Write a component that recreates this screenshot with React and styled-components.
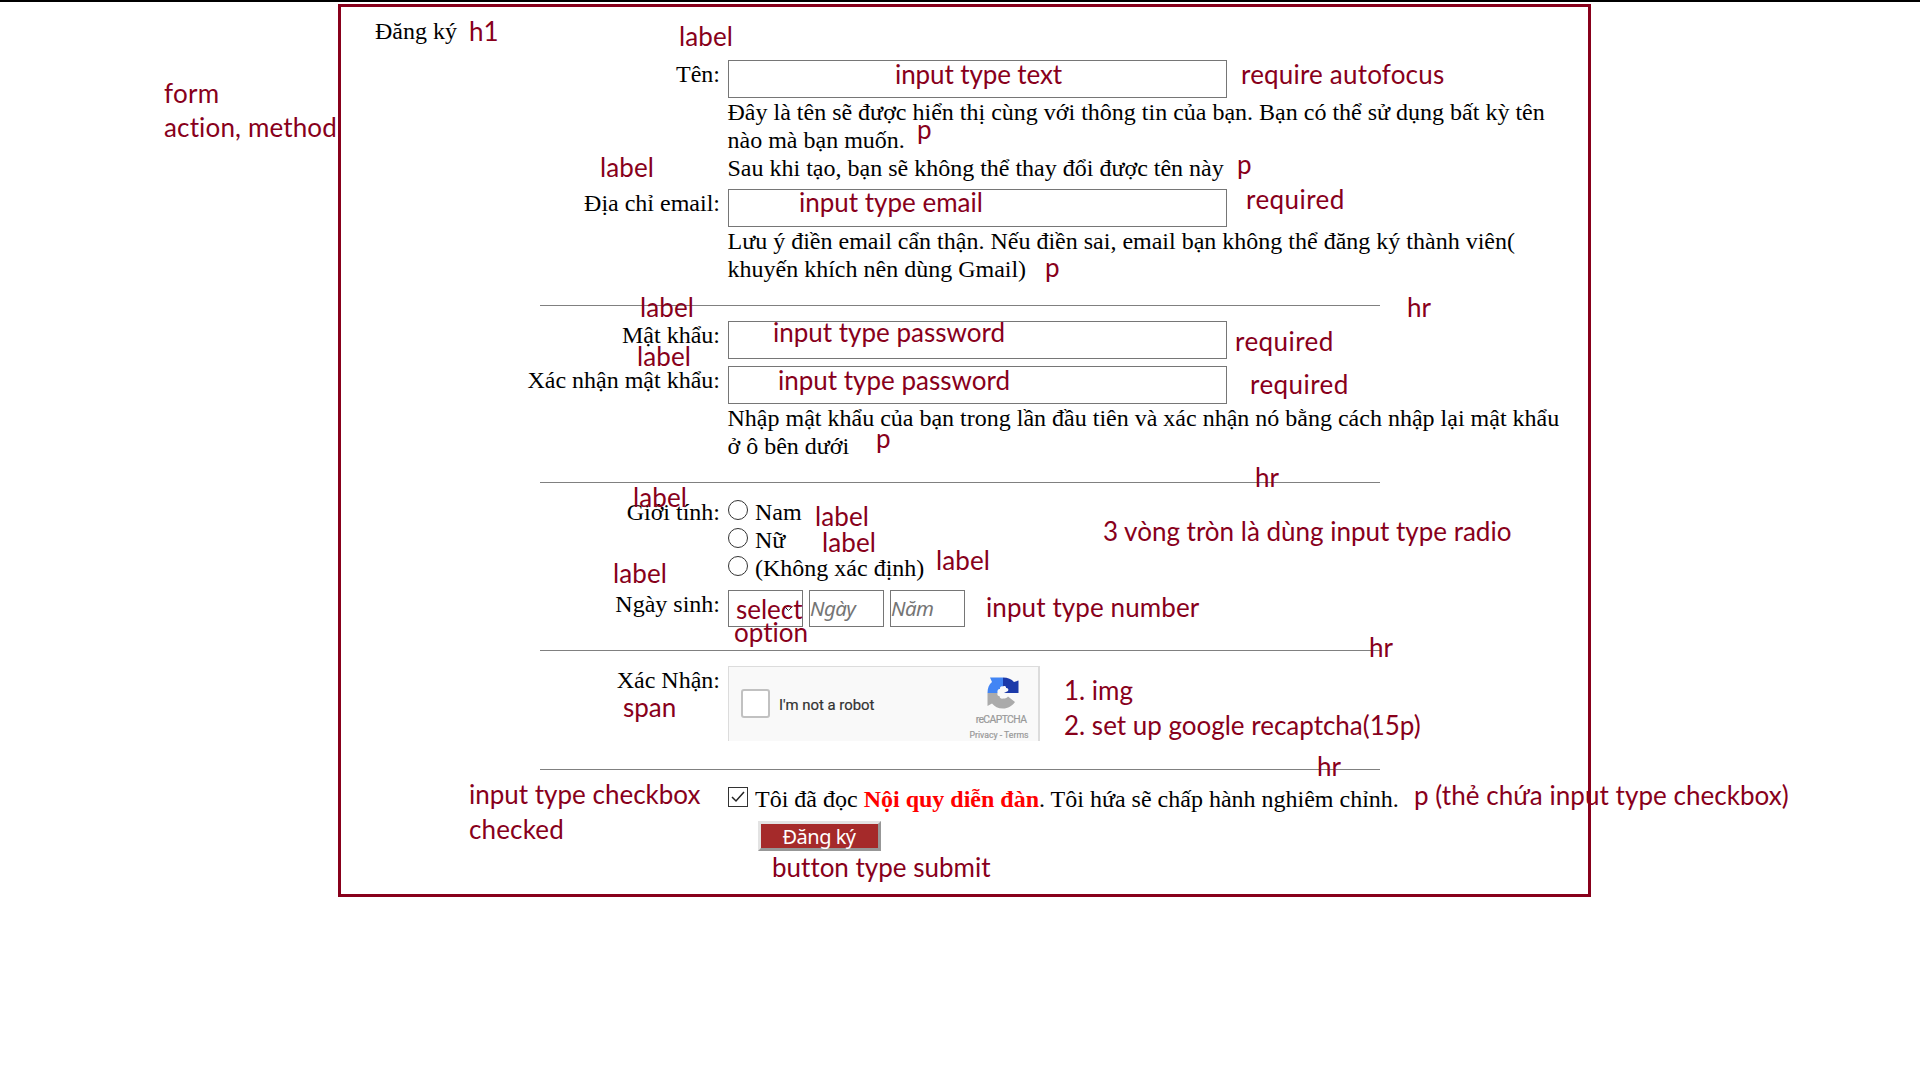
import React from "react";
import styled, { createGlobalStyle } from "styled-components";

const GlobalStyle = createGlobalStyle`
  * { box-sizing: border-box; }
  body { margin: 0; background: #fff; overflow: hidden; }
  h1, p { margin: 0; font-size: inherit; font-weight: 400; }
`;

const Page = styled.div`
  position: relative;
  width: 1920px;
  height: 1080px;
  border-top: 2px solid #000;
  padding: 2px 0 0 338px;
  font-family: "Liberation Serif", "Times New Roman", serif;
  font-size: 24px;
  line-height: 28px;
  color: #000;
`;

const Form = styled.form`
  width: 1253px;
  height: 893px;
  border: 3px solid #88001b;
  padding: 10px 0 0 34px;
`;

const Title = styled.h1`
  margin-bottom: 15px;
`;

const Row = styled.div`
  display: grid;
  grid-template-columns: 345px 850px;
  column-gap: 8px;
  margin-bottom: ${(p) => p.$gap || 0}px;
`;

const Label = styled.label`
  text-align: right;
  white-space: nowrap;
`;

const Content = styled.div`
  display: flex;
  flex-direction: column;
  align-items: flex-start;
`;

const TextInput = styled.input`
  display: block;
  width: 499px;
  height: 38px;
  border: 1px solid #767676;
  background: #fff;
  padding: 0 4px;
  outline: none;
`;

const Note = styled.p`
  margin-left: -0.5px;
  white-space: nowrap;
`;

const Rule = styled.hr`
  width: 840px;
  height: 1px;
  border: 0;
  background: #808080;
  margin: 0 0 ${(p) => p.$after}px 165px;
`;

const Choice = styled.label`
  display: flex;
  gap: 7px;
  height: 28px;
  white-space: nowrap;
`;

const Radio = styled.input`
  appearance: none;
  width: 20px;
  height: 20px;
  margin: 2px 0 0;
  border: 1px solid #333;
  border-radius: 50%;
  background: #fff;
`;

const Check = styled.span`
  display: flex;
  width: 20px;
  height: 20px;
  margin-top: 2px;
  border: 1px solid #333;
`;

const DateFields = styled.div`
  display: flex;
  gap: 6px;
`;

const Month = styled.div`
  display: flex;
  align-items: center;
  justify-content: flex-end;
  width: 75px;
  height: 37px;
  border: 1px solid #767676;
  padding-right: 9px;
`;

const NumberInput = styled.input`
  width: 75px;
  height: 37px;
  border: 1px solid #767676;
  padding: 0 0 1px;
  font: italic 20.5px "Noto Sans", "Open Sans", sans-serif;
  letter-spacing: -0.6px;
  outline: none;
  &::placeholder { color: #757575; opacity: 1; }
`;

const Captcha = styled.div`
  display: flex;
  align-items: flex-start;
  width: 312px;
  height: 75px;
  background: #f9f9f9;
  border: 1px solid #dcdcdc;
  border-bottom: 0;
  border-right-width: 2px;
  overflow: hidden;
  font-family: Roboto, sans-serif;
`;

const CaptchaBox = styled.span`
  width: 29px;
  height: 29px;
  margin: 22px 0 0 12px;
  border: 2px solid #c1c1c1;
  border-radius: 3px;
  background: #fff;
`;

const CaptchaText = styled.span`
  flex: 1;
  margin: 24px 0 0 9px;
  font-size: 14.9px;
  color: #333;
  -webkit-text-stroke: 0.2px #333;
`;

const Brand = styled.div`
  display: flex;
  flex-direction: column;
  align-items: center;
  width: 74px;
  padding-top: 10px;
  color: #999;
`;

const BrandName = styled.span`
  margin-top: 4px;
  font-size: 10.4px;
  line-height: 14px;
  letter-spacing: -0.6px;
  -webkit-text-stroke: 0.2px #999;
`;

const BrandLinks = styled.span`
  margin: 2px 4px 0 0;
  font-size: 8.7px;
  line-height: 13px;
  white-space: nowrap;
  -webkit-text-stroke: 0.2px #999;
`;

const Rules = styled.b`
  color: #f00;
`;

const Submit = styled.button`
  width: 123px;
  height: 30px;
  margin: 8px 0 0 30px;
  padding: 1px 1px 0 0;
  border: 3px solid;
  border-color: #e3e3e3 #979797 #979797 #e3e3e3;
  background: #a52a2a;
  color: #fff;
  font: 20px/22px "Noto Sans", "Open Sans", sans-serif;
  letter-spacing: -0.5px;
`;

/* Remarks that float above the form. */
const Remark = styled.span`
  position: absolute;
  left: ${(p) => p.$x + 1}px;
  top: ${(p) => p.$base - 28}px;
  font-family: Lato, "Open Sans", sans-serif;
  font-size: 26px;
  line-height: 34px;
  font-variant-ligatures: none;
  letter-spacing: ${(p) => p.$spacing}px;
  color: #88001b;
  white-space: pre;
`;

const remarks = [
  ["h1", 468, 40],
  ["label", 678, 45, 0.1],
  ["form", 163, 102, 0.3],
  ["action, method", 163, 136, 0.15],
  ["label", 599, 176, 0.1],
  ["input type text", 894, 83, -0.1],
  ["require autofocus", 1240, 83, 0.2],
  ["p", 916, 138],
  ["p", 1236, 173],
  ["input type email", 798, 211],
  ["required", 1245, 208, 0.45],
  ["p", 1044, 276],
  ["label", 639, 316, 0.1],
  ["input type password", 772, 341],
  ["label", 636, 365, 0.1],
  ["input type password", 777, 389],
  ["p", 875, 447],
  ["hr", 1406, 316],
  ["required", 1234, 350, 0.45],
  ["required", 1249, 393, 0.45],
  ["hr", 1254, 486],
  ["label", 632, 506, 0.1],
  ["label", 814, 525, 0.1],
  ["label", 821, 551, 0.1],
  ["label", 935, 569, 0.1],
  ["label", 612, 582, 0.1],
  ["select", 735, 618],
  ["option", 733, 641],
  ["input type number", 985, 616, 0.1],
  ["3 vòng tròn là dùng input type radio", 1102, 540],
  ["span", 622, 716],
  ["hr", 1368, 656],
  ["1. img", 1063, 699],
  ["2. set up google recaptcha(15p)", 1063, 734],
  ["hr", 1316, 775],
  ["input type checkbox", 468, 803],
  ["checked", 468, 838, 0.15],
  ["button type submit", 771, 876],
  ["p (thẻ chứa input type checkbox)", 1413, 804, 0.05],
];

const CaptchaLogo = styled(({ className }) => (
  <svg className={className} width="32" height="32" viewBox="0 0 32 32">
    <path d="M16 .5v9c-1.500-1-3.500.5-3 2.500-1.500-.5-3 1-2.500 4H.5C.5 11 2 7.500 5 5L3 .5z" fill="#4285f4" />
    <path d="M16 .5c5 0 8.500 1.500 11 4.500L31.500 3.500V16H17l4-2c1-2-.5-3.500-2-3 .5-1.500-1.500-2.500-3-1.500z" fill="#1c3aa9" />
    <path d="M.5 16h10c-.5 2 .5 3.500 2 3 0 2 1.500 3 4 2.500 2 0 3.500-.5 4.500-2l7 5.500c-3 4-7 6.500-12 6.500-5 0-8.500-2-11-5L.5 29z" fill="#ababab" />
  </svg>
))`
  margin-left: 3px;
`;

export default function App() {
  return (
    <Page>
      <GlobalStyle />
      <Form>
        <Title>Đăng ký</Title>
        <Row $gap={7}>
          <Label>Tên:</Label>
          <Content>
            <TextInput type="text" />
            <Note>Đây là tên sẽ được hiển thị cùng với thông tin của bạn. Bạn có thể sử dụng bất kỳ tên<br />nào mà bạn muốn.</Note>
            <Note>Sau khi tạo, bạn sẽ không thể thay đổi được tên này</Note>
          </Content>
        </Row>
        <Row $gap={22}>
          <Label>Địa chỉ email:</Label>
          <Content>
            <TextInput type="email" />
            <Note>Lưu ý điền email cẩn thận. Nếu điền sai, email bạn không thể đăng ký thành viên(<br />khuyến khích nên dùng Gmail)</Note>
          </Content>
        </Row>
        <Rule $after={15} />
        <Row $gap={7}>
          <Label>Mật khẩu:</Label>
          <TextInput type="password" />
        </Row>
        <Row $gap={22}>
          <Label>Xác nhận mật khẩu:</Label>
          <Content>
            <TextInput type="password" />
            <Note>Nhập mật khẩu của bạn trong lần đầu tiên và xác nhận nó bằng cách nhập lại mật khẩu<br />ở ô bên dưới</Note>
          </Content>
        </Row>
        <Rule $after={15} />
        <Row $gap={8}>
          <Label>Giới tính:</Label>
          <Content>
            <Choice><Radio type="radio" name="gender" />Nam</Choice>
            <Choice><Radio type="radio" name="gender" />Nữ</Choice>
            <Choice><Radio type="radio" name="gender" />(Không xác định)</Choice>
          </Content>
        </Row>
        <Row $gap={23}>
          <Label>Ngày sinh:</Label>
          <DateFields>
            <Month>
              <svg width="9" height="6" viewBox="0 0 9 6"><path d="M.5.5l4 4 4-4" fill="none" stroke="#222" /></svg>
            </Month>
            <NumberInput placeholder="Ngày" />
            <NumberInput placeholder="Năm" />
          </DateFields>
        </Row>
        <Rule $after={15} />
        <Row $gap={28}>
          <Label as="span">Xác Nhận:</Label>
          <Captcha>
            <CaptchaBox />
            <CaptchaText>I'm not a robot</CaptchaText>
            <Brand>
              <CaptchaLogo />
              <BrandName>reCAPTCHA</BrandName>
              <BrandLinks>Privacy - Terms</BrandLinks>
            </Brand>
          </Captcha>
        </Row>
        <Rule $after={15} />
        <Row>
          <span />
          <Content>
            <Choice as="p">
              <Check>
                <svg width="18" height="18" viewBox="0 0 18 18"><path d="M3 9l4 4 8-9" fill="none" stroke="#222" strokeWidth="1.500" /></svg>
              </Check>
              <span>Tôi đã đọc <Rules>Nội quy diễn đàn</Rules>. Tôi hứa sẽ chấp hành nghiêm chỉnh.</span>
            </Choice>
            <Submit type="submit">Đăng ký</Submit>
          </Content>
        </Row>
      </Form>
      {remarks.map(([text, x, base, spacing = 0], i) => (
        <Remark key={i} $x={x} $base={base} $spacing={spacing}>{text}</Remark>
      ))}
    </Page>
  );
}
